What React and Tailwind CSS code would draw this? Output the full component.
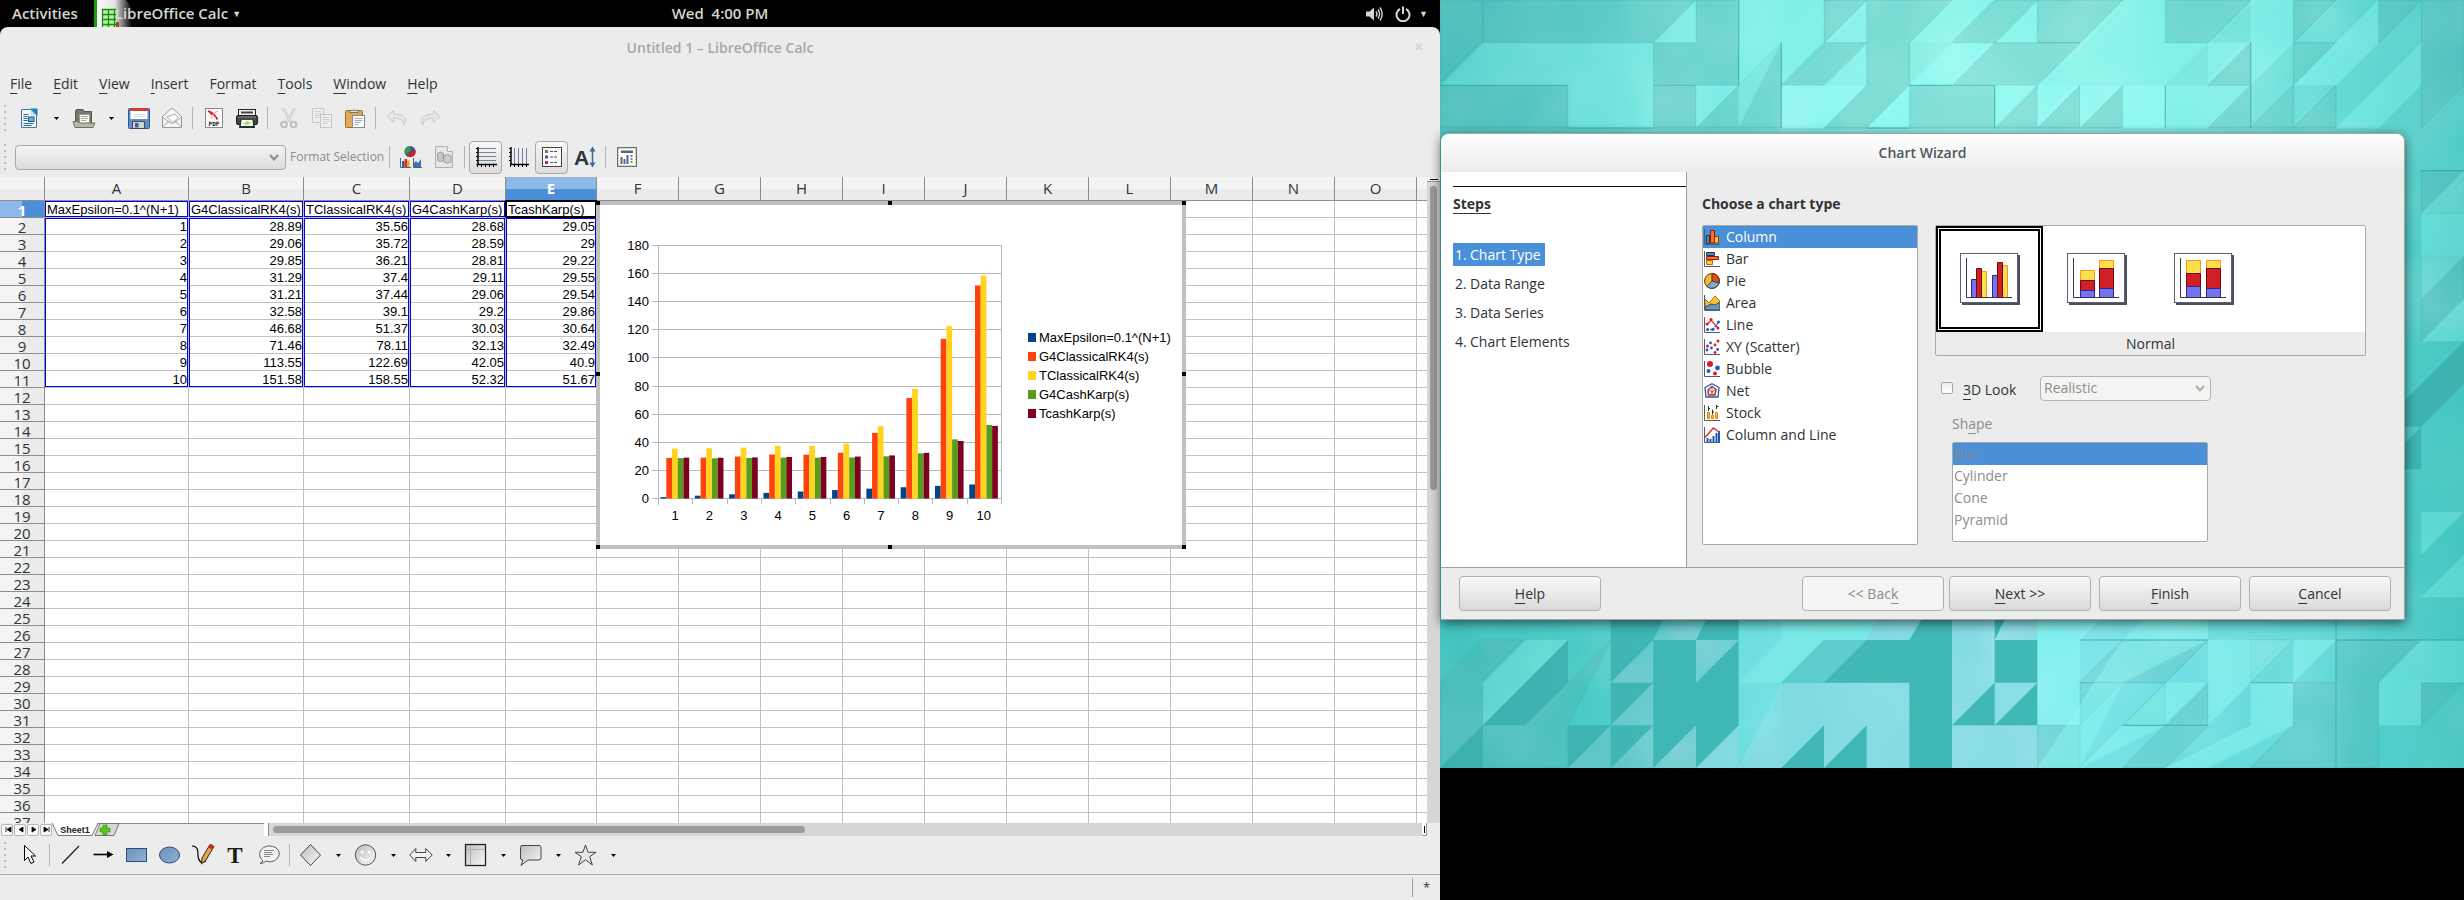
import React from "react";

const UI = "font-['Open_Sans','Noto_Sans',sans-serif]";
const SHEET = "font-['Liberation_Sans',Arial,sans-serif]";

const HEADERS = ["MaxEpsilon=0.1^(N+1)", "G4ClassicalRK4(s)", "TClassicalRK4(s)", "G4CashKarp(s)", "TcashKarp(s)"];
const DATA = [
  [1, 28.89, 35.56, 28.68, 29.05],
  [2, 29.06, 35.72, 28.59, 29],
  [3, 29.85, 36.21, 28.81, 29.22],
  [4, 31.29, 37.4, 29.11, 29.55],
  [5, 31.21, 37.44, 29.06, 29.54],
  [6, 32.58, 39.1, 29.2, 29.86],
  [7, 46.68, 51.37, 30.03, 30.64],
  [8, 71.46, 78.11, 32.13, 32.49],
  [9, 113.55, 122.69, 42.05, 40.9],
  [10, 151.58, 158.55, 52.32, 51.67],
];
const COLORS = ["#004586", "#ff420e", "#ffd320", "#579d1c", "#7e0021"];
const COLS = "ABCDEFGHIJKLMNO".split("");
const ROWS = Array.from({ length: 37 }, (_, i) => i + 1);

function Key({ text, at = 0 }) {
  return (
    <span className="whitespace-pre">
      {text.slice(0, at)}
      <span className="underline underline-offset-4">{text[at]}</span>
      {text.slice(at + 1)}
    </span>
  );
}

function Ico({ children, size = 24, box = 24 }) {
  return (
    <svg width={size} height={size} viewBox={`0 0 ${box} ${box}`} fill="none" aria-hidden="true" className="shrink-0">
      {children}
    </svg>
  );
}

/* ---------- toolbar pieces ---------- */

function Tool({ label, children, pressed, disabled }) {
  return (
    <button
      type="button"
      aria-label={label}
      disabled={disabled}
      className={
        "flex h-[33px] w-[33px] shrink-0 items-center justify-center rounded " +
        (pressed ? "border border-[#a8a8a8] bg-linear-to-b from-[#f7f7f7] to-[#dcdcdc]" : "")
      }
    >
      {children}
    </button>
  );
}

function Caret({ label }) {
  return (
    <button type="button" aria-label={label} className="flex h-[33px] w-[22px] shrink-0 items-center justify-center">
      <svg width="5" height="3" viewBox="0 0 5 3" aria-hidden="true">
        <path d="M0 0h5L2.5 3z" fill="#000" />
      </svg>
    </button>
  );
}

function Sep() {
  return (
    <span className="flex w-[9px] shrink-0 justify-center">
      <span className="h-[22px] w-px bg-[#b4b4b4]" />
    </span>
  );
}

function Grip() {
  return (
    <span className="flex w-[12px] shrink-0 flex-col items-center gap-1 pr-0.5">
      {[0, 1, 2, 3, 4].map((i) => (
        <span key={i} className="h-[2px] w-[2px] bg-[#bdbdbd]" />
      ))}
    </span>
  );
}

const NewIcon = () => (
  <Ico>
    <path d="M4.5 3.5h9l6 6v12h-15z" fill="#f6fafc" stroke="#3a7d9e" />
    <path d="M13 2.500h7.500v7.500z" fill="#1f7fae" />
    <path d="M13.500 3.500l6 6h-6z" fill="#c8e3f0" />
    <path d="M6.500 8.500h5M6.500 10.500h4M6.500 17.500h10M6.500 19.500h8M6.500 12.500h4M6.500 14.500h4" stroke="#2a6a92" />
    <rect x="11.500" y="11" width="5.500" height="4.500" fill="#6eb1d6" stroke="#1a5a80" />
  </Ico>
);
const OpenIcon = () => (
  <Ico>
    <path d="M3.500 18V4.500L5 3.500h6l1.500 2h7V18z" fill="#76796a" stroke="#56584c" />
    <rect x="7.500" y="8.500" width="10" height="9" fill="#fafafa" stroke="#9a9a92" />
    <path d="M9 10.500h7M9 12.500h7M9 14.500h5" stroke="#a9a99f" />
    <path d="M1 15.500h5l2 1.500h15l-2 4.500H3z" fill="#b6b8a8" stroke="#6d6f60" />
  </Ico>
);
const SaveIcon = () => (
  <Ico>
    <rect x="1.500" y="2.500" width="21" height="20" rx="1" fill="#5f8ccb" stroke="#2f5796" />
    <rect x="3.500" y="2" width="17" height="11" fill="#fff" />
    <rect x="3" y="2" width="18" height="3" fill="#d83a2b" />
    <path d="M6 8.500h12M6 10.500h12" stroke="#dedede" />
    <rect x="5.500" y="15.500" width="12" height="7" fill="#d2d4d0" stroke="#3d4b5d" />
    <rect x="8" y="17" width="3.500" height="4.500" fill="#3b5f95" />
  </Ico>
);
const MailIcon = () => (
  <Ico>
    <path d="M2.500 10.500L10.500 3q1.500-1 3 0l8 7.500v11h-19z" fill="#f4f4f4" stroke="#999" />
    <path d="M7 11l8-3 3 4-5 4.500z" fill="#fff" stroke="#b2b2b2" />
    <path d="M2.500 11l7 5.500q2.500 1.500 5 0l7-5.500M2.500 21l7-6M21.500 21l-7-6" stroke="#a6a6a6" />
  </Ico>
);
const PdfIcon = () => (
  <Ico>
    <rect x="3.500" y="2.500" width="17" height="19" fill="#fafafa" stroke="#8a8a8a" />
    <path d="M6 5c4 1 7 4 9.500 8.500" stroke="#e02020" strokeWidth="1.800" />
    <path d="M16 4.500C13 6 10 10 9 13" stroke="#f0a0a0" strokeWidth="1" />
    <path d="M5.500 4.500l5 2-1 3z" fill="#e02020" />
    <text x="12" y="20" textAnchor="middle" fontSize="6" fontWeight="700" fill="#111" fontFamily="DejaVu Sans Mono, monospace">PDF</text>
  </Ico>
);
const PrintIcon = () => (
  <Ico>
    <rect x="3.500" y="3.500" width="17" height="8" fill="#f0f0f0" stroke="#222" />
    <rect x="6" y="5.500" width="12" height="2" fill="#444" />
    <rect x="1.500" y="9.500" width="21" height="9" rx="1.500" fill="#444746" stroke="#1b1b1b" />
    <path d="M3 11h18" stroke="#8b8b8b" />
    <path d="M5 14h14l1 8H4z" fill="#2c2c2c" />
    <path d="M6.500 14h11l.7 6H5.800z" fill="#f4fbe9" />
    <path d="M8 18l4-3 4 2-4 2z" fill="#9ed67d" />
  </Ico>
);
const CutIcon = () => (
  <Ico>
    <path d="M6 2.500l8 14M17.500 2.500l-8 14" stroke="#c4c4c4" strokeWidth="2.200" />
    <path d="M6 2.500l8 14M17.500 2.500l-8 14" stroke="#ececec" strokeWidth=".8" />
    <circle cx="7" cy="18.500" r="2.800" stroke="#bcbcbc" strokeWidth="1.800" />
    <circle cx="16.500" cy="18.500" r="2.800" stroke="#bcbcbc" strokeWidth="1.800" />
  </Ico>
);
const CopyIcon = () => (
  <Ico>
    <rect x="2.500" y="2.500" width="11" height="14" fill="#efefef" stroke="#c8c8c8" />
    <path d="M4.500 5.500h7M4.500 7.500h7M4.500 9.500h7M4.500 11.500h5" stroke="#d2d2d2" />
    <rect x="10.500" y="8.500" width="11" height="13" fill="#efefef" stroke="#c4c4c4" />
    <path d="M12.500 11.500h7M12.500 13.500h7M12.500 15.500h7M12.500 17.500h5" stroke="#cdcdcd" />
  </Ico>
);
const PasteIcon = () => (
  <Ico>
    <rect x="2.500" y="4.500" width="17" height="17" rx="1" fill="#dfa95a" stroke="#9c6b20" />
    <path d="M6.500 6.500v-2h3a2 2 0 0 1 3 0h3v2z" fill="#d8d8d8" stroke="#777" />
    <rect x="9.500" y="9.500" width="12" height="12" fill="#fbfbfb" stroke="#8a8a8a" />
    <path d="M11.500 12.500h8M11.500 14.500h8M11.500 16.500h6M11.500 18.500h4" stroke="#aaa" />
  </Ico>
);
const UndoIcon = ({ flip }) => (
  <Ico>
    <path
      transform={flip ? "translate(24 0) scale(-1 1)" : undefined}
      d="M8.500 4.500L2 10.500l6.500 6v-4c6-.5 10 1 10.500 6.500 3-4 2.500-11-10.500-11z"
      fill="#e6e6e6"
      stroke="#cacaca"
    />
  </Ico>
);

const ChartTypeIcon = () => (
  <Ico>
    <circle cx="11" cy="6.500" r="5.500" fill="#2f5f9c" />
    <path d="M11 6.500V1a5.500 5.500 0 0 0-4.500 8.500z" fill="#3c9b3c" />
    <path d="M11 6.500l5.500-1.500A5.500 5.500 0 0 1 8 11z" fill="#d0202c" />
    <path d="M1.500 13v9.500H12M14.500 13v9.500H23" stroke="#56607a" />
    <path d="M3 16h2.500v6H3z" fill="#2b5da8" />
    <path d="M5.500 14H8v8H5.500z" fill="#e0301e" />
    <path d="M8 15.500h2.500V22H8z" fill="#f0a01e" />
    <path d="M15 22v-4l2-2 2 2 3-4v8z" fill="#3a74b8" />
  </Ico>
);
const CylIcon = () => (
  <Ico>
    <path d="M3.500 1.500h12l5 5v16h-17z" fill="#e6e6e6" stroke="#b0b0b0" />
    <path d="M15.500 1.500v5h5" stroke="#b0b0b0" fill="#f7f7f7" />
    <path d="M5.500 8.500q3-3 6 0v7q-3 2-6 0z" fill="#c6c6c6" stroke="#9c9c9c" />
    <path d="M12 11q3.500-3 7 0v6q-3.500 2.500-7 0z" fill="#cdcdcd" stroke="#9c9c9c" />
  </Ico>
);
const HGridIcon = () => (
  <Ico>
    <path d="M5 3.500h17M5 7.500h17M5 11.500h17M5 15.500h17" stroke="#6c86a0" />
    <path d="M4 2v18M2.500 19.500H23" stroke="#000" strokeWidth="1.500" />
    <path d="M2 3.500h2M2 7.500h2M2 11.500h2M2 15.500h2M7.500 19v3M11.500 19v3M15.500 19v3M19.500 19v3M3.500 19v3" stroke="#000" />
  </Ico>
);
const VGridIcon = () => (
  <Ico>
    <path d="M7.500 3v16M11.500 3v16M15.500 3v16M19.500 3v16" stroke="#6c86a0" />
    <path d="M4 2v18M3 19.500h19" stroke="#000" strokeWidth="1.500" />
    <path d="M2 3.500h2M2 7.500h2M2 11.500h2M2 15.500h2M7.500 19v3M11.500 19v3M15.500 19v3M19.500 19v3M3.500 19v3" stroke="#000" />
  </Ico>
);
const LegendIcon = () => (
  <Ico>
    <rect x="2.500" y="2.500" width="19" height="19" fill="#fafafa" stroke="#444" />
    <path d="M5 5h3v3H5z" fill="#5a8a5a" />
    <path d="M5 10.500h3v3H5z" fill="#5a4a8a" />
    <path d="M5 16h3v3H5z" fill="#a03a2a" />
    <path d="M10 6.500h8M10 12h8M10 17.500h8" stroke="#555" strokeDasharray="3 1" />
  </Ico>
);
const ScaleTextIcon = () => (
  <Ico>
    <text x="8.500" y="20" textAnchor="middle" fontSize="21" fontWeight="700" fill="#2e3436" fontFamily="Liberation Sans, sans-serif">A</text>
    <path d="M19.500 5v15" stroke="#3e6796" strokeWidth="1.500" />
    <path d="M19.500 1.500l3 5h-6zM19.500 22.500l3-5h-6z" fill="#3e6796" />
  </Ico>
);
const AutoLayoutIcon = () => (
  <Ico>
    <rect x="2.500" y="2.500" width="19" height="19" fill="#fff" stroke="#57719a" />
    <rect x="3.500" y="3.500" width="17" height="17" stroke="#e8c23a" strokeDasharray="2 1" />
    <path d="M6 5.500h12V8H6z" fill="#4a6a94" />
    <path d="M6.500 12v7M9.500 14v5M12.500 10v9" stroke="#4a6a94" strokeWidth="2" />
    <path d="M16.500 10v9" stroke="#6a86ac" strokeWidth="2" strokeDasharray="2 1" />
  </Ico>
);

/* ---------- main window ---------- */

function TopBar() {
  return (
    <header className="relative flex h-[27px] shrink-0 items-center justify-between bg-black pl-3 text-[15px] leading-[27px] font-semibold text-[#d3d7cf]">
      <nav className="flex items-center">
        <button type="button">Activities</button>
        <button type="button" className="relative ml-4 flex h-[27px] items-center gap-1 pl-[21px]">
          <svg width="38" height="27" viewBox="0 0 38 27" className="absolute top-0 left-0" aria-hidden="true">
            <defs>
              <linearGradient id="fade" x1="0" x2="1">
                <stop offset="0" stopColor="#fff" />
                <stop offset=".55" stopColor="#e4e4e4" />
                <stop offset="1" stopColor="#000" />
              </linearGradient>
            </defs>
            <path d="M0 0h32l6 8v19H0z" fill="url(#fade)" />
            <path d="M0 0h3v27H0z" fill="#18a303" />
            <path d="M8 9h14v18H8z" fill="#b5f2a5" />
            <path d="M8 9.500h14M8 14.500h14M8 19.500h14M8 24.500h14M8.500 9v18M14.500 9v18M20.500 9v18" stroke="#1a8a12" strokeWidth="1.300" />
            <path d="M22 22h3v5h-3z" fill="#a34a1a" />
          </svg>
          <span className="relative">LibreOffice Calc</span>
          <span className="relative text-[9px]">▼</span>
        </button>
      </nav>
      <time className="absolute left-1/2 -translate-x-1/2 whitespace-pre">Wed  4:00 PM</time>
      <div className="flex items-center gap-3 pr-3">
        <svg width="17" height="16" viewBox="0 0 17 16" fill="none" role="img" aria-label="Volume">
          <path d="M0 5.500h3.500L8 1.500v13l-4.500-4H0z" fill="#d3d7cf" />
          <path d="M10 5.500q1.800 2.500 0 5M12 3.500q3.200 4.500 0 9M14 1.500q4.400 6.500 0 13" stroke="#d3d7cf" strokeWidth="1.400" />
        </svg>
        <div className="flex items-center gap-2">
          <svg width="16" height="16" viewBox="0 0 16 16" fill="none" role="img" aria-label="Power">
            <path d="M5 3a6.500 6.500 0 1 0 6 0M8 .5V8" stroke="#d3d7cf" strokeWidth="2" />
          </svg>
          <span className="text-[9px]">▼</span>
        </div>
      </div>
    </header>
  );
}

function SheetChart() {
  const x0 = 62;
  const y0 = 297;
  const catW = 34.3;
  const k = 253 / 180;
  const barW = catW / 6;
  return (
    <figure className="absolute top-0 left-[596px] h-[348px] w-[590px] border-[4px] border-[#c0c0c0] bg-white">
      <svg width="590" height="348" viewBox="0 0 590 348" className="-m-1" fontFamily="Liberation Sans, Arial, sans-serif" fontSize="13" fill="#000" role="img" aria-label="Column chart">
        {Array.from({ length: 10 }, (_, i) => {
          const y = Math.round(y0 - i * 20 * k) + 0.5;
          return (
            <g key={i}>
              <path d={`M${x0 - 6} ${y}H${x0 + 343}`} stroke="#b8b8b8" />
              <text x={x0 - 9} y={y + 4} textAnchor="end">{i * 20}</text>
            </g>
          );
        })}
        <path d={`M${x0}.5 44v260M${x0 + 343}.5 44v253`} stroke="#b8b8b8" />
        {DATA.map((row, c) => (
          <g key={c}>
            <path d={`M${Math.round(x0 + (c + 1) * catW) + 0.5} 297v6`} stroke="#b8b8b8" />
            {row.map((v, s) => (
              <rect key={s} x={x0 + c * catW + barW * (s + 0.45)} y={y0 + 0.5 - v * k} width={barW} height={v * k} fill={COLORS[s]} />
            ))}
            <text x={x0 + (c + 0.5) * catW} y="319" textAnchor="middle">{c + 1}</text>
          </g>
        ))}
        {HEADERS.map((h, i) => (
          <g key={h}>
            <rect x="432" y={132 + i * 19} width="8" height="9" fill={COLORS[i]} />
            <text x="443" y={141 + i * 19}>{h}</text>
          </g>
        ))}
        {[0, 292, 586].map((x) =>
          [0, 171, 344].map((y) => (x === 292 && y === 171 ? null : <rect key={x + "-" + y} x={x} y={y} width="4" height="4" />))
        )}
      </svg>
    </figure>
  );
}

function RangeOutlines() {
  const widths = ["w-[144px]", "w-[115px]", "w-[106px]", "w-[96px]", "w-[91px]"];
  return (
    <div className="pointer-events-none absolute top-0 left-[45px] flex" aria-hidden="true">
      {widths.map((w, i) => (
        <div key={w} className={"flex flex-col gap-px pr-px " + w}>
          <div className={"h-4 border " + (i === 4 ? "border-black outline-1 outline-black" : "border-[#0000e0]")} />
          <div className="h-[169px] border border-[#0000e0]" />
        </div>
      ))}
    </div>
  );
}

function HeadCell({ text }) {
  const m = text.match(/^(MaxEpsilon|TcashKarp)(.*)$/);
  if (!m) return text;
  return (
    <>
      <span className="underline decoration-red-600 decoration-dotted decoration-1 underline-offset-2">{m[1]}</span>
      {m[2]}
    </>
  );
}

function Spreadsheet() {
  return (
    <div className="flex min-h-0 flex-1">
      <div className="relative min-w-0 flex-1 overflow-hidden bg-white">
        <table className="w-full table-fixed border-separate border-spacing-0">
          <colgroup>
            <col className="w-[45px]" />
            <col className="w-[144px]" />
            <col className="w-[115px]" />
            <col className="w-[106px]" />
            <col className="w-[96px]" />
            <col className="w-[91px]" />
            {COLS.slice(5).map((c) => (
              <col key={c} className="w-[82px]" />
            ))}
            <col />
          </colgroup>
          <thead>
            <tr className="h-6 text-[15px] leading-[23px] text-[#2e3436]">
              <th className="border-r border-b border-[#8c8c8c] bg-[linear-gradient(#f4f4f4_50%,#ebebeb_50%)] p-0" />
              {COLS.map((c) => (
                <th
                  key={c}
                  scope="col"
                  className={
                    "h-6 border-r border-b border-[#8c8c8c] p-0 " +
                    (c === "E"
                      ? "bg-[linear-gradient(#8db8e8_50%,#4a90d9_50%)] font-bold text-white"
                      : "bg-[linear-gradient(#f4f4f4_50%,#ebebeb_50%)] font-normal")
                  }
                >
                  {c}
                </th>
              ))}
              <th className="border-b border-[#8c8c8c] bg-[linear-gradient(#f4f4f4_50%,#ebebeb_50%)] p-0" />
            </tr>
          </thead>
          <tbody>
            {ROWS.map((r) => (
              <tr key={r} className="h-[17px]">
                <th
                  scope="row"
                  className={
                    "h-[17px] border-r border-b border-[#8c8c8c] px-0 pt-0.5 pb-0 text-[15px] leading-[14px] " +
                    (r === 1
                      ? "bg-[linear-gradient(90deg,#8db8e8_50%,#4a90d9_50%)] font-bold text-white"
                      : "bg-[linear-gradient(90deg,#f4f4f4_50%,#ebebeb_50%)] font-normal text-[#2e3436]")
                  }
                >
                  {r}
                </th>
                {COLS.map((c, i) => {
                  const value = r === 1 ? HEADERS[i] : DATA[r - 2]?.[i];
                  return (
                    <td
                      key={c}
                      className={
                        "border-r border-b border-[#c0c0c0] pt-0.5 pr-px pb-0 pl-0.5 text-[13px] leading-[14px] whitespace-nowrap text-black " +
                        SHEET +
                        (r === 1 ? " text-left" : " text-right")
                      }
                    >
                      {r === 1 && value ? <HeadCell text={value} /> : value}
                    </td>
                  );
                })}
                <td className="border-b border-[#c0c0c0] p-0" />
              </tr>
            ))}
          </tbody>
        </table>
        <div className="absolute top-6 left-0">
          <RangeOutlines />
          <SheetChart />
        </div>
      </div>
      <div className="flex w-[13px] shrink-0 flex-col items-center bg-[#d6d6d6]">
        <div className="flex h-[5px] w-full items-center justify-center border-b border-[#999] bg-[#f2f2f2]">
          <span className="h-px w-2 bg-black" />
        </div>
        <div className="mt-1 h-[304px] w-[7px] rounded-full bg-[#999b9d]" />
      </div>
    </div>
  );
}

function TabBar() {
  const arrows = ["M3 2v5M8 2L4 4.500 8 7z", "M7 2L3 4.500 7 7z", "M3 2l4 2.500L3 7z", "M2 2l4 2.500L2 7zM7 2v5"];
  const names = ["First sheet", "Previous sheet", "Next sheet", "Last sheet"];
  return (
    <div className="flex h-[13px] shrink-0 items-stretch bg-[#ececec] pr-[13px]">
      <div className="flex w-[52px] shrink-0 items-center gap-px pl-px">
        {arrows.map((d, i) => (
          <button key={d} type="button" aria-label={names[i]} className="flex h-3 w-3 items-center justify-center rounded-xs border border-[#b5b5b5] bg-[#f8f8f8]">
            <svg width="9" height="9" viewBox="0 0 9 9" aria-hidden="true">
              <path d={d} fill="#000" stroke="#000" strokeWidth=".8" />
            </svg>
          </button>
        ))}
      </div>
      <div className="relative flex w-[212px] shrink-0 border-t border-[#888]">
        <svg width="68" height="13" viewBox="0 0 68 13" className="absolute -top-px left-0" aria-hidden="true">
          <path d="M43 12.500L48 .5h19L62 12.500z" fill="#d8d8d8" stroke="#777" />
          <path d="M0 0l6 12.500h34L46 0z" fill="#fff" />
          <path d="M0 0l6 12.500h34L46 0" fill="none" stroke="#777" />
          <path d="M51 2h4v3h3v4h-3v3h-4V9h-3V5h3z" fill="#5cc21e" stroke="#2f8a0c" strokeWidth=".6" />
        </svg>
        <button type="button" className="relative w-[46px] text-center font-['Liberation_Sans',sans-serif] text-[9px] leading-[11px] font-bold text-[#222]">Sheet1</button>
        <button type="button" aria-label="Add sheet" className="relative w-[20px]" />
      </div>
      <div className="w-[5px] shrink-0 border-r border-[#888] bg-white" />
      <div className="flex flex-1 items-center bg-[#d6d6d6] px-1">
        <div className="h-[7px] w-[46.500%] rounded-full bg-[#999b9d]" />
      </div>
      <div className="flex w-[5px] shrink-0 items-center justify-center border-r border-b border-[#999] bg-white">
        <span className="h-[7px] w-px bg-black" />
      </div>
    </div>
  );
}

function Toolbars() {
  return (
    <>
      <div className="flex h-[38px] items-center">
        <Grip />
        <Tool label="New"><NewIcon /></Tool>
        <Caret label="New menu" />
        <Tool label="Open"><OpenIcon /></Tool>
        <Caret label="Open menu" />
        <Tool label="Save"><SaveIcon /></Tool>
        <Tool label="Email"><MailIcon /></Tool>
        <Sep />
        <Tool label="Export as PDF"><PdfIcon /></Tool>
        <Tool label="Print"><PrintIcon /></Tool>
        <Sep />
        <Tool label="Cut" disabled><CutIcon /></Tool>
        <Tool label="Copy" disabled><CopyIcon /></Tool>
        <Tool label="Paste"><PasteIcon /></Tool>
        <Sep />
        <Tool label="Undo" disabled><UndoIcon /></Tool>
        <Tool label="Redo" disabled><UndoIcon flip /></Tool>
      </div>
      <div className="flex h-10 items-center">
        <Grip />
        <div className="relative ml-[3px] flex shrink-0 items-center">
          <select aria-label="Chart element" className="h-[25px] w-[271px] appearance-none rounded border border-[#a8a8a8] bg-linear-to-b from-[#f4f4f4] to-[#dcdcdc]">
            <option></option>
          </select>
          <svg width="10" height="7" viewBox="0 0 10 7" fill="none" className="pointer-events-none absolute right-[7px]" aria-hidden="true">
            <path d="M1 1l4 4.500L9 1" stroke="#8b8b86" strokeWidth="2" />
          </svg>
        </div>
        <button type="button" disabled className="ml-1 w-[95px] text-left text-[12px] whitespace-nowrap text-[#8d8d8a]">Format Selection</button>
        <Sep />
        <Tool label="Chart type"><ChartTypeIcon /></Tool>
        <Tool label="Chart data table" disabled><CylIcon /></Tool>
        <Sep />
        <Tool label="Horizontal grids" pressed><HGridIcon /></Tool>
        <Tool label="Vertical grids"><VGridIcon /></Tool>
        <Tool label="Legend" pressed><LegendIcon /></Tool>
        <Tool label="Scale text"><ScaleTextIcon /></Tool>
        <Sep />
        <Tool label="Automatic layout"><AutoLayoutIcon /></Tool>
      </div>
    </>
  );
}

function DrawBar() {
  return (
    <div className="flex h-[39px] shrink-0 items-center border-b border-[#a9a9a9]">
      <svg width="0" height="0" className="absolute" aria-hidden="true">
        <defs>
          <linearGradient id="gray" x1="0" y1="0" x2="1" y2="1">
            <stop offset="0" stopColor="#bdbdbd" />
            <stop offset="1" stopColor="#f8f8f8" />
          </linearGradient>
          <linearGradient id="blue" x1="0" y1="0" x2="1" y2="1">
            <stop offset="0" stopColor="#6a8fbc" />
            <stop offset="1" stopColor="#93b2d4" />
          </linearGradient>
        </defs>
      </svg>
      <Grip />
      <Tool label="Select">
        <Ico><path d="M7.500 2.500v15l3.500-3.500 3 6.500 3-1.500-3-6h4.500z" fill="#fff" stroke="#000" /></Ico>
      </Tool>
      <Sep />
      <Tool label="Line"><Ico><path d="M3 20.500L20 3" stroke="#222" strokeWidth="1.300" /></Ico></Tool>
      <Tool label="Arrow"><Ico><path d="M1.500 11.500h15" stroke="#000" strokeWidth="1.600" /><path d="M15 8l6.500 3.500L15 15z" fill="#000" /></Ico></Tool>
      <Tool label="Rectangle"><Ico><rect x="1.500" y="5.500" width="20" height="13" fill="url(#blue)" stroke="#2c4d75" /></Ico></Tool>
      <Tool label="Ellipse"><Ico><ellipse cx="11.500" cy="12" rx="10" ry="8" fill="url(#blue)" stroke="#2c4d75" /></Ico></Tool>
      <Tool label="Freeform line">
        <Ico>
          <path d="M1 3c6 0 6 5 6 9s2 10 8 6" stroke="#000" strokeWidth="1.200" />
          <path d="M11 15L19 1.500l4 2L15 17l-4.500 4z" fill="#e0a94a" stroke="#3b2a12" />
          <path d="M17 4.500L19 1.500q2-1 4 2l-2 3z" fill="#c5302a" />
        </Ico>
      </Tool>
      <Tool label="Text">
        <Ico><text x="11" y="19.500" textAnchor="middle" fontSize="23" fontWeight="700" fill="#1c1a12" fontFamily="Liberation Serif, serif">T</text></Ico>
      </Tool>
      <Tool label="Callout">
        <Ico>
          <path d="M3 20.500c2-1 2.500-2 2.500-3.500-6-5-2-14 7-14s12 8 8 12c-3 4.500-9 4-11.500 3-1.500 1.500-4 2.500-6 2.500z" fill="#f2f2f2" stroke="#555" />
          <path d="M7 7.500h10M7 9.500h8M7 11.500h9M7 13.500h6" stroke="#888" />
        </Ico>
      </Tool>
      <Sep />
      <Tool label="Basic shapes"><Ico><path d="M11.500 1.500l10 10.500-10 10.500L1.500 12z" fill="url(#gray)" stroke="#444" /></Ico></Tool>
      <Caret label="Basic shapes menu" />
      <Tool label="Symbol shapes">
        <Ico>
          <circle cx="11.500" cy="12" r="10.200" fill="url(#gray)" stroke="#555" />
          <circle cx="8" cy="9" r="1.500" fill="#fff" />
          <circle cx="15" cy="9" r="1.500" fill="#fff" />
          <path d="M6 14q5.500 6.500 11 0" stroke="#fff" strokeWidth="1.300" />
        </Ico>
      </Tool>
      <Caret label="Symbol shapes menu" />
      <Tool label="Block arrows"><Ico><path d="M.8 12l6-6.500v4h10v-4l6.400 6.500-6.400 6.500v-4h-10v4z" fill="#f2f2f2" stroke="#444" /></Ico></Tool>
      <Caret label="Block arrows menu" />
      <Tool label="Flowcharts">
        <Ico>
          <rect x="1.500" y="1.500" width="20" height="21" fill="url(#gray)" stroke="#222" strokeWidth="1.300" />
          <path d="M6.500 2v20M2 6.500h19" stroke="#b0b0b0" />
        </Ico>
      </Tool>
      <Caret label="Flowcharts menu" />
      <Tool label="Callouts"><Ico><path d="M3 2.500h17q2 0 2 2V15q0 2-2 2H9l-7 5.500L4 17H3q-1.500 0-1.500-2V4.500q0-2 1.500-2z" fill="url(#gray)" stroke="#444" /></Ico></Tool>
      <Caret label="Callouts menu" />
      <Tool label="Stars"><Ico><path d="M11.500 2l2.600 7.300H22l-6.300 4.400 2.700 8.300-6.900-5.200L4.600 22l2.700-8.300L1 9.300h7.900z" fill="#e6e6e6" stroke="#444" /></Ico></Tool>
      <Caret label="Stars menu" />
    </div>
  );
}

function CalcWindow() {
  const menus = ["File", "Edit", "View", "Insert", "Format", "Tools", "Window", "Help"];
  return (
    <main className="flex min-h-0 flex-1 flex-col rounded-t-lg bg-[#ececec]">
      <div className="relative flex h-10 shrink-0 items-center justify-center text-[14px] font-semibold text-[#a8a8a4]">
        <h1>Untitled 1 – LibreOffice Calc</h1>
        <button type="button" aria-label="Close" className="absolute right-[17px]">
          <svg width="8" height="8" viewBox="0 0 8 8" aria-hidden="true">
            <path d="M1 1l6 6M7 1L1 7" stroke="#d4d4d4" strokeWidth="2" />
          </svg>
        </button>
      </div>
      <nav className="flex h-8 shrink-0 items-center gap-[21px] pl-[10px] text-[14px] text-[#2e3436]">
        {menus.map((m) => (
          <button key={m} type="button"><Key text={m} at={m === "Format" ? 1 : 0} /></button>
        ))}
      </nav>
      <div className="shrink-0">
        <Toolbars />
      </div>
      <Spreadsheet />
      <TabBar />
      <DrawBar />
      <footer className="flex h-[25px] shrink-0 items-center justify-end">
        <span className="h-[19px] w-px bg-[#a0a0a0]" />
        <span className="w-[27px] text-center text-[13px] leading-[13px] text-[#2e3436]">*</span>
      </footer>
    </main>
  );
}

/* ---------- wallpaper: facets on a 24 x 18 grid ---------- */

const FACETS = {
  shade: [
    "1,0 6,0 5,1 1,1", "0,0 1,0 1,1 0,2", "0,2 3,2 3,3 0,3", "6,0 7,0 7,2 5,2 5,1 6,1", "9,0 10,0 9,1",
    "9,1 10,1 9,2 8,2", "8,1 8,3 6,3", "10,0 12,0 11,1 11,2 10,3 9,3 10,2", "13,0 14,0 13,1 12,1",
    "11,2 13,2 13,3 11,3", "13,1 15,1 14,2 12,2", "14,0 16,0 15,1 14,1", "14,2 14,3 13,3", "15,2 15,3 14,3",
    "16,2 16,3 15,3", "17,0 19,0 18,1 17,1", "19,1 19,2 18,2", "19,2 19,3 18,3", "20,0 21,0 20,1", "21,1 20,2 20,1",
    "22,0 23,0 22,1", "23,0 24,0 24,2 23,3 23,2", "5,2 6,2 6,3 5,3", "20,2 20,3 19,3", "21,2 21,3 20,3",
    "23,4 24,4 24,5 23,5", "24,6 24,7 23,8 23,6",
    "2,15 1,16 1,17 0,18 0,16 1,15", "4,15 3,17 3,18 1,18 1,17 2,17 3,16", "16,15 18,15 17,16 15,16", "15,16 16,16 15,17",
    "17,16 17,17 16,17", "18,16 18,17 17,18 16,18", "19,15 20,15 19,16", "20,16 21,16 21,18 19,18 20,17", "21,15 23,15 22,16 22,18 21,18",
    "23,16 24,16 23,17", "14,17 15,17 15,18 14,18",
  ],
  light: [
    "1,1 4,1 3,2 0,2", "4,1 5,1 5,3 3,3 3,2", "6,0 6,1 5,1", "7,0 9,0 9,1 8,2 8,1 7,3", "7,2 6,3 6,2", "10,0 10,1 9,1",
    "10,1 10,2 9,2", "12,0 13,0 12,1 11,1", "14,0 14,1 13,1", "16,0 17,0 17,1 18,1 17,2 14,2 15,1", "19,1 18,2 18,1",
    "19,0 20,0 20,1 19,2 19,1", "18,2 19,2 18,3 17,3 17,2", "22,0 22,1 21,2 20,2 21,1", "23,1 23,2 22,3 21,3 22,2",
    "23,5 24,4 24,6 23,7", "23,8 24,7 24,8", "23,12 24,12 23,13", "24,13 24,14 23,14",
    "2,15 3,15 2,16 2,17 1,17 1,16", "8,15 9,15 8,16 7,16", "8,14 10.500,14 10,15 8,15", "14,14 16,14 15,15 15,17 14,17",
    "17,14 18,14 18,15 16,16 15,18 14,18 16,15", "18,15 20,15 19,16 18,17 18,16", "20,15 21,15 20,16", "19,16 20,16 20,17 18,18 17,18 19,17",
    "15,18 17,17 18,16 17,16", "22,16 23,15 24,15 24,16 23,16 23,17 22,17",
  ],
  bright: ["8,2 10,2 9,3 8,3", "12,1 13,1 12,2 11,2", "11,2 11,3 10,3", "13,2 14,2 13,3", "14,2 15,2 14,3", "15,2 16,2 15,3", "16,2 17,2 17,3 16,3"],
  pale: [
    "9,16 11,16 11,18 7,18 8,16", "12,14 13,14 13,16 12,17", "14,16 13,17 13,16",
    "12,17 14,17 14,18 12,18", "7,17 7,18 6,18", "13,15 14,14 14,15", "10.500,14 11.500,14 11,15 10,15",
  ],
  soft: ["5,15 5,16 4,16", "5,16 5,17 4,17", "6,14 6.500,14 6,15 5,15", "6,15 7,15 6,16", "4,17 4,18 3,18", "5,17 5,18 4,18", "6,17 6,18 5,18"],
  deep: [
    "4,14 5.500,14 5,15 4,15", "4,15 5,15 4,16", "4,16 5,16 4,17", "5,15 6,15 6,17 5,18", "6,16 7,15 7,17 6,18 6,17", "6.500,14 7,14 7,15 6,15",
    "3,17 4,17 3,18", "4,17 5,17 4,18", "3,15 3,16 2,17 1,17", "1,17 1,18 0,18", "9,15 11,15 11.600,14 12,14 12,18 11,18 11,16 8,16",
    "9,17 9,18 8,18", "10,17 10,18 9,18", "13,14 13.500,14 13,15", "13,15 14,15 14,16 13,16", "13,16 13,17 12,17", "14,16 14,17 13,17",
    "24,8 24,9 23,10 22,10 23,9", "23,10 23,11 22,11",
  ],
};

const facets = (list) => list.map((p) => <polygon key={p} points={p} />);

function Wallpaper() {
  return (
    <svg viewBox="0 0 24 18" className="block w-full" preserveAspectRatio="none" aria-hidden="true">
      <defs>
        <radialGradient id="sky" cx=".54" cy=".1" r=".62">
          <stop offset="0" stopColor="#90f3e8" />
          <stop offset=".5" stopColor="#6adfd7" />
          <stop offset="1" stopColor="#4bd0cc" />
        </radialGradient>
        <radialGradient id="floor" cx=".58" cy=".88" r=".42">
          <stop offset="0" stopColor="#80e6ee" />
          <stop offset="1" stopColor="#80e6ee" stopOpacity="0" />
        </radialGradient>
        <linearGradient id="edge" x1="0" x2="1">
          <stop offset="0" stopColor="#2a9a98" stopOpacity=".25" />
          <stop offset=".25" stopColor="#2a9a98" stopOpacity="0" />
          <stop offset=".85" stopColor="#2a9a98" stopOpacity="0" />
          <stop offset="1" stopColor="#2a9a98" stopOpacity=".2" />
        </linearGradient>
        <filter id="grain" x="0" y="0" width="1" height="1">
          <feTurbulence type="fractalNoise" baseFrequency=".6" numOctaves="2" seed="4" />
          <feColorMatrix values="0 0 0 0 1  0 0 0 0 1  0 0 0 0 1  0.900 0.500 0 0 -.55" />
        </filter>
      </defs>
      <rect width="24" height="18" fill="url(#sky)" />
      <rect width="24" height="18" fill="url(#floor)" />
      <g fill="#5aa9a6" fillOpacity=".22" stroke="#2fa3a2" strokeOpacity=".4" strokeWidth=".02">{facets(FACETS.shade)}</g>
      <g fill="#8ffff6" fillOpacity=".4">{facets(FACETS.light)}</g>
      <g fill="#90fbf3" fillOpacity=".8">{facets(FACETS.bright)}</g>
      <g fill="#88d9e2" fillOpacity=".8">{facets(FACETS.pale)}</g>
      <g fill="#6cc9cd" fillOpacity=".8">{facets(FACETS.soft)}</g>
      <path
        d="M0 2h3M3 3h2M11 2h1M10 3h1M7 0v2M8 1v2M19 1v2M17 2v1M13 2v1M18 15h-2M16 17h2M19 16h1M21 14v2M15 15h1M21 15h3M23 4h1"
        stroke="#2fa3a2"
        strokeOpacity=".6"
        strokeWidth=".03"
      />
      <rect width="24" height="18" filter="url(#grain)" opacity=".3" />
      <g fill="#40b8b7">{facets(FACETS.deep)}</g>
      <g fill="#7fe6ea" fillOpacity=".45">
        <polygon points="7,14.500 8,14 8,17 7,18" />
        <polygon points="9,15 10,15 9,16 8,16" />
      </g>
      <rect width="24" height="18" fill="url(#edge)" />
    </svg>
  );
}

/* ---------- chart wizard ---------- */

const Axis = () => <path d="M.5 0v15.500H16" stroke="#555b66" />;
const TYPES = [
  ["Column", <><Axis /><path d="M2.500 6.500h3v8h-3z" fill="#5f87ad" stroke="#1c3850" /><path d="M10.500 7.500h4v6.500h-4z" fill="#fcc53a" stroke="#a3300c" /><path d="M6.500 1.500h4v12.500h-4z" fill="#f4722b" stroke="#8c1c04" /></>],
  ["Bar", <><Axis /><path d="M2.500 1.500h8v3h-8z" fill="#5f87ad" stroke="#1c3850" /><path d="M2.500 9.500h6v4h-6z" fill="#fcc53a" stroke="#b86f0c" /><path d="M2.500 5.500h12v3h-12z" fill="#f4722b" stroke="#8c1c04" /></>],
  ["Pie", <><circle cx="8" cy="8" r="7.500" fill="#f9b632" stroke="#5a4320" /><path d="M8 8V.5A7.500 7.500 0 0 1 15 10z" fill="#e0521a" stroke="#6b2007" /><path d="M8 8l7 2a7.500 7.500 0 0 1-12 3.500z" fill="#86a9c4" stroke="#2d4a62" /></>],
  ["Area", <><path d="M1 4l4 4 6-7 5 5v9H1z" fill="#fbbf36" stroke="#a87408" /><path d="M1 12l6-3 4 1 5-3v8H1z" fill="#6c93b6" stroke="#2a4b68" /><Axis /></>],
  ["Line", <><Axis /><path d="M3 8l4-5 7 8" stroke="#e03030" strokeWidth="1.400" /><path d="M3 12.500h6l6-8" stroke="#2f62c4" strokeWidth="1.400" strokeDasharray="2 1" /><g fill="#d81e1e"><circle cx="3" cy="7" r="1.500" /><circle cx="7" cy="2.500" r="1.500" /><circle cx="14" cy="11" r="1.500" /></g><g fill="#2058c8"><circle cx="3.500" cy="12.500" r="1.500" /><circle cx="9" cy="12.500" r="1.500" /><circle cx="14.500" cy="5" r="1.500" /></g></>],
  ["XY (Scatter)", <><Axis /><g fill="#d81e1e"><circle cx="3.500" cy="7" r="1.500" /><circle cx="14" cy="2" r="1.500" /><circle cx="11" cy="6" r="1.400" /><circle cx="11" cy="13.500" r="1.400" /></g><g fill="#2058c8"><circle cx="6.500" cy="4" r="1.400" /><circle cx="3" cy="11" r="1.400" /><circle cx="7.500" cy="9" r="1.400" /><circle cx="13.500" cy="10.500" r="1.400" /></g></>],
  ["Bubble", <><Axis /><circle cx="6" cy="3" r="3" fill="#d81e1e" /><circle cx="13.500" cy="7" r="2.400" fill="#2058c8" /><circle cx="4.500" cy="10" r="2" fill="#2058c8" /><circle cx="11" cy="12.500" r="2" fill="#d81e1e" /></>],
  ["Net", <><path d="M8 .8l7 3.700-1 9.500H2L1 4.500z" stroke="#1d5bb0" strokeWidth="1.300" /><path d="M8 3.500l4 3-1 5.500H4.500L4 7z" stroke="#c81e2e" strokeWidth="1.400" /><path d="M8 5v4M5 7l3 2 3-2M6 12l2-3 2 3" stroke="#555" strokeWidth=".8" /></>],
  ["Stock", <><Axis /><path d="M4.500 1v5M4.500 3.500H6M8.500 4.500v5M8.500 7H10M12.500 0v4M12.500 1.500H14.500" stroke="#333" /><path d="M3.500 7.500h2v6h-2zM7.500 10.500h2v3h-2zM11.500 7.500h2v6h-2z" fill="#fbc02e" stroke="#e08410" /></>],
  ["Column and Line", <><Axis /><path d="M3.500 15v-4M6.500 15v-3M9.500 15V9M12.500 15V6M15 15V4" stroke="#1c56b4" strokeWidth="2" /><path d="M1 10.500L9.500 1l6 4.500" stroke="#d42a2a" strokeWidth="1.300" /></>],
];

const PREVIEWS = [
  ["Normal", <>
    <g fill="#7374f0" stroke="#33209a"><path d="M11.500 26.500h5v18h-5zM32.500 22.500h5v22h-5z" /></g>
    <g fill="#fbe04b" stroke="#f09a22"><path d="M21.500 18.500h5v26h-5zM42.500 12.500h5v32h-5z" /></g>
    <g fill="#cf2026" stroke="#74070b"><path d="M16.500 15.500h5v29h-5zM37.500 9.500h5v35h-5z" /></g>
  </>],
  ["Stacked", <>
    <g fill="#fbe04b" stroke="#f09a22"><path d="M13.500 17.500h14v10h-14zM32.500 7.500h14v8h-14z" /></g>
    <g fill="#cf2026" stroke="#74070b"><path d="M13.500 27.500h14v10h-14zM32.500 15.500h14v20h-14z" /></g>
    <g fill="#7374f0" stroke="#33209a"><path d="M13.500 37.500h14v7h-14zM32.500 35.500h14v9h-14z" /></g>
  </>],
  ["Percent Stacked", <>
    <g fill="#fbe04b" stroke="#f09a22"><path d="M12.500 7.500h14v13h-14zM32.500 7.500h14v8h-14z" /></g>
    <g fill="#cf2026" stroke="#74070b"><path d="M12.500 20.500h14v13h-14zM32.500 15.500h14v20h-14z" /></g>
    <g fill="#7374f0" stroke="#33209a"><path d="M12.500 33.500h14v11h-14zM32.500 35.500h14v9h-14z" /></g>
  </>],
];

function WizardButton({ text, at, disabled, className = "" }) {
  return (
    <button
      type="button"
      disabled={disabled}
      className={
        "h-[35px] w-[142px] shrink-0 rounded border border-[#b0b0b0] " +
        (disabled ? "bg-[#f4f4f2] text-[#8d8d8a] " : "bg-linear-to-b from-[#f9f9f9] to-[#dadada] ") +
        className
      }
    >
      <Key text={text} at={at} />
    </button>
  );
}

function ChartWizard() {
  const steps = ["Chart Type", "Data Range", "Data Series", "Chart Elements"];
  const shapes = ["Box", "Cylinder", "Cone", "Pyramid"];
  return (
    <section
      role="dialog"
      aria-labelledby="wizard-title"
      className="absolute top-[133px] left-px w-[964px] rounded-t-lg border-t border-r border-b border-[#a5a5a0] bg-[#ececec] text-[14px] leading-[22px] text-[#2e3436] shadow-[0_3px_12px_rgba(0,0,0,0.6)]"
    >
      <h2 id="wizard-title" className="h-[38px] rounded-t-lg bg-linear-to-b from-white to-[#ececec] text-center leading-[38px] font-semibold text-[#4b595c]">
        Chart Wizard
      </h2>
      <div className="flex h-[396px] border-b border-[#a0a0a0]">
        <aside className="w-[246px] shrink-0 border-r border-[#a0a0a0] bg-white pt-[14px] pl-3">
          <div className="border-t border-[#111] pt-1.5">
            <h3 className="font-bold underline underline-offset-4">Steps</h3>
          </div>
          <ol className="mt-7 flex flex-col items-start gap-1.5">
            {steps.map((s, i) => (
              <li key={s}>
                <button type="button" className={"flex h-[23px] items-center pl-0.5 " + (i === 0 ? "bg-[#4a90d9] pr-1 text-white" : "pr-0.5")}>
                  <span className="w-[15px] text-left">{i + 1}.</span>
                  {s}
                </button>
              </li>
            ))}
          </ol>
        </aside>
        <div className="flex flex-1 flex-col pt-[21px] pl-[15px]">
          <h3 className="font-bold">Choose a chart type</h3>
          <div className="mt-2.5 flex gap-[17px]">
            <ul aria-label="Chart type" className="h-[320px] w-[216px] shrink-0 rounded-xs border border-[#a9a9a9] bg-white">
              {TYPES.map(([name, art], i) => (
                <li key={name}>
                  <button type="button" className={"flex h-[22px] w-full items-center gap-1.5 pl-px " + (i === 0 ? "bg-[#4a90d9] text-white" : "")}>
                    <Ico size={16} box={16}>{art}</Ico>
                    {name}
                  </button>
                </li>
              ))}
            </ul>
            <div className="w-[431px] shrink-0">
              <div className="rounded-xs border border-[#a9a9a9]">
                <div className="flex h-[106px] bg-white">
                  {PREVIEWS.map(([name, art], i) => (
                    <button
                      key={name}
                      type="button"
                      aria-label={name}
                      className={"flex h-[106px] w-[107px] items-center justify-center " + (i === 0 ? "border-2 border-black p-px" : "")}
                    >
                      <span className={"flex h-full w-full items-center justify-center " + (i === 0 ? "border-2 border-black" : "")}>
                        <svg width="60" height="52" viewBox="0 0 60 52" fill="none" aria-hidden="true">
                          <path d="M2 2h58v50H2z" fill="#4b4f63" />
                          <rect x=".5" y=".5" width="57" height="49" fill="#fff" stroke="#5b6072" />
                          {art}
                          <path d="M6.500 5v39.500H52" stroke="#333647" />
                        </svg>
                      </span>
                    </button>
                  ))}
                </div>
                <p className="h-[23px] text-center leading-[23px]">Normal</p>
              </div>
              <div className="mt-[19px] flex items-center">
                <input
                  id="look3d"
                  type="checkbox"
                  className="ml-1.5 h-3 w-3 appearance-none rounded-xs border border-[#a5a79c] bg-linear-to-b from-[#eeeeea] to-white"
                />
                <label htmlFor="look3d" className="ml-2.5 w-[77px] pt-1"><Key text="3D Look" /></label>
                <div className="relative flex items-center">
                  <select aria-label="3D scheme" disabled className="h-[25px] w-[171px] appearance-none rounded border border-[#b3b3b0] bg-[#f4f4f2] pl-[3px] text-[14px] leading-[22px] text-[#8d8d8a] opacity-100">
                    <option>Realistic</option>
                  </select>
                  <svg width="10" height="7" viewBox="0 0 10 7" fill="none" className="pointer-events-none absolute right-[6px]" aria-hidden="true">
                    <path d="M1 1l4 4.500L9 1" stroke="#b0b0ac" strokeWidth="2" />
                  </svg>
                </div>
              </div>
              <div className="mt-3 ml-[17px] text-[#8d8d8a]">
                <p id="shape-label"><Key text="Shape" at={2} /></p>
                <ul aria-labelledby="shape-label" className="mt-[7px] h-[100px] w-[256px] rounded-xs border border-[#a9a9a9] bg-white">
                  {shapes.map((s, i) => (
                    <li key={s}>
                      <button type="button" disabled className={"h-[22px] w-full pl-px text-left " + (i === 0 ? "bg-[#4a90d9] text-[#808890]" : "")}>{s}</button>
                    </li>
                  ))}
                </ul>
              </div>
            </div>
          </div>
        </div>
      </div>
      <div className="flex h-[51px] items-center pr-[13px] pl-[18px]">
        <WizardButton text="Help" at={0} />
        <WizardButton text="<< Back" at={6} disabled className="mr-[5px] ml-auto" />
        <WizardButton text="Next >>" at={0} className="mr-2" />
        <WizardButton text="Finish" at={0} className="mr-2" />
        <WizardButton text="Cancel" at={0} />
      </div>
    </section>
  );
}

export default function App() {
  return (
    <div className={"grid h-screen grid-cols-[1440fr_1024fr] overflow-hidden bg-black " + UI}>
      <div className="flex min-h-0 min-w-0 flex-col">
        <TopBar />
        <CalcWindow />
      </div>
      <div className="relative min-w-0">
        <Wallpaper />
        <ChartWizard />
      </div>
    </div>
  );
}
